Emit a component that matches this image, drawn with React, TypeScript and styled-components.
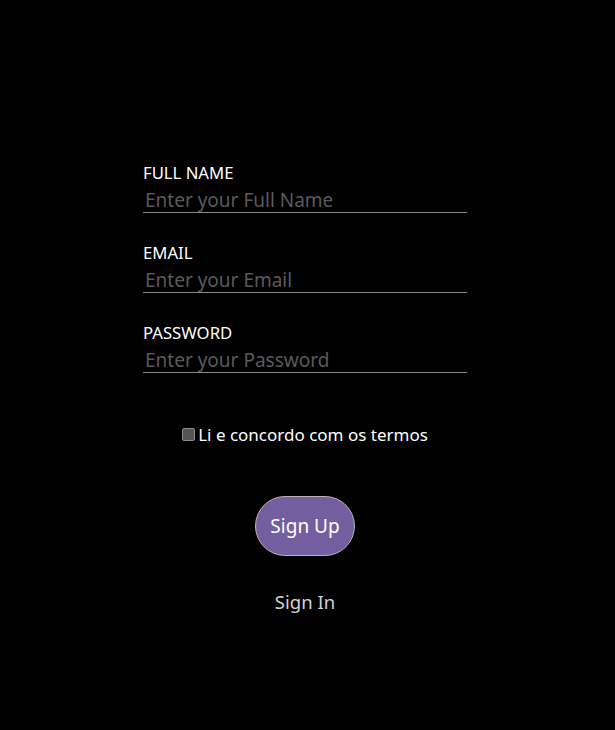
import React from "react";
import styled, { createGlobalStyle } from "styled-components";

const Global = createGlobalStyle`
  html, body { margin: 0; padding: 0; background: #000; }
  body { font-family: "Noto Sans", "Open Sans", sans-serif; }
`;

const Page = styled.div`
  width: 615px;
  height: 730px;
  background: #000;
  display: flex;
  flex-direction: column;
  align-items: center;
  padding: 162px 5px 0 0;
  box-sizing: border-box;
`;

const Form = styled.form`
  width: 324px;
  display: flex;
  flex-direction: column;
`;

const Field = styled.div`
  display: flex;
  flex-direction: column;
  margin-bottom: 29px;
`;

const Label = styled.label`
  color: #fff;
  font-size: 16.7px;
  line-height: 22px;
  height: 22px;
`;

const Input = styled.input`
  background: transparent;
  border: none;
  border-bottom: 1px solid #8a8a8a;
  color: #fff;
  font-family: inherit;
  font-size: 19px;
  line-height: 24px;
  height: 29px;
  box-sizing: border-box;
  padding: 4px 2px 0;
  margin: 0;
  outline: none;
  &::placeholder { color: #5a5a5a; }
`;

const CheckRow = styled.label`
  display: flex;
  align-items: center;
  justify-content: center;
  gap: 3px;
  color: #fff;
  font-size: 17px;
  margin-top: 21px;
`;

const Box = styled.span`
  width: 11px;
  height: 11px;
  border: 1px solid #8c8c8c;
  border-radius: 2px;
  background: #545454;
  display: inline-block;
`;

const SignUp = styled.button`
  align-self: center;
  margin-top: 50px;
  width: 100px;
  height: 60px;
  border-radius: 30px;
  border: 1px solid #bdb3b3;
  background: #735f9f;
  color: #fff;
  font-family: inherit;
  font-size: 19px;
  cursor: pointer;
`;

const SignIn = styled.button`
  align-self: center;
  margin-top: 34px;
  background: transparent;
  border: none;
  color: #d3d3d3;
  font-family: inherit;
  font-size: 18.5px;
  padding: 0;
  line-height: 24px;
`;

export default function App() {
  return (
    <>
      <Global />
      <Page>
        <Form onSubmit={(e) => e.preventDefault()}>
          <Field>
            <Label>FULL NAME</Label>
            <Input placeholder="Enter your Full Name" />
          </Field>
          <Field>
            <Label>EMAIL</Label>
            <Input placeholder="Enter your Email" />
          </Field>
          <Field>
            <Label>PASSWORD</Label>
            <Input type="password" placeholder="Enter your Password" />
          </Field>
          <CheckRow>
            <Box />
            Li e concordo com os termos
          </CheckRow>
          <SignUp type="submit">Sign Up</SignUp>
          <SignIn type="button">Sign In</SignIn>
        </Form>
      </Page>
    </>
  );
}
